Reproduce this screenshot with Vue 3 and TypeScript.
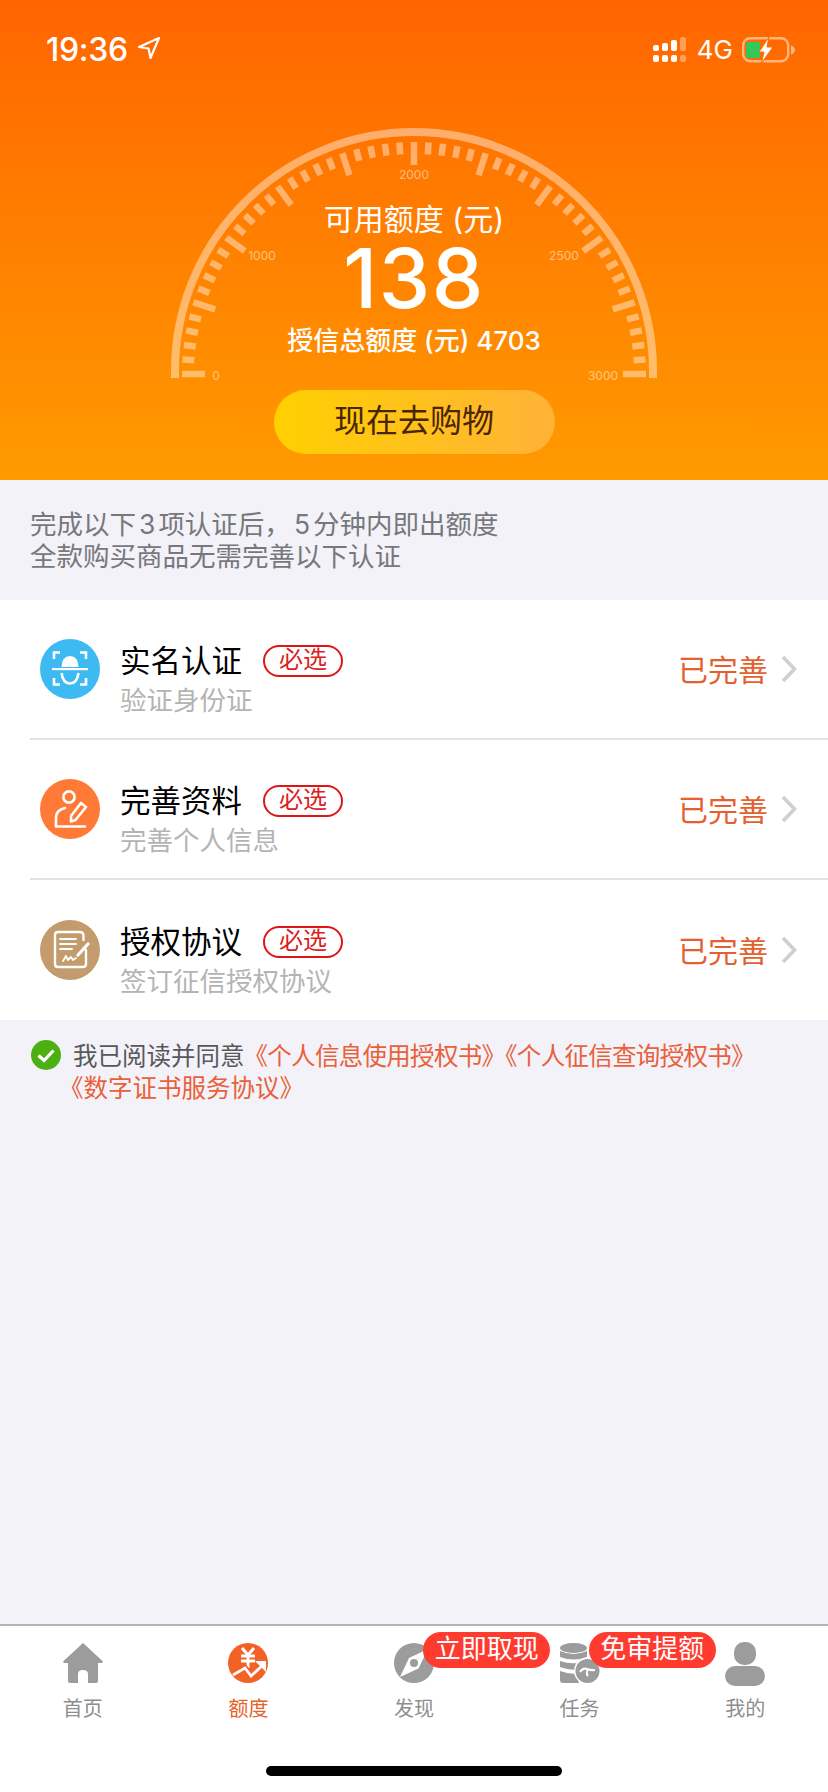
<script setup lang="ts">
// gauge ticks run over a half circle, 50 steps, a long one every 5
const cx = 250
const cy = 254

const ticks = Array.from({ length: 51 }, (_, i) => {
  const major = i % 5 === 0
  const a = (Math.PI * i) / 50
  const outer = 232
  const inner = major ? outer - 23 : outer - 12
  return {
    x1: cx - Math.cos(a) * outer,
    y1: cy - Math.sin(a) * outer,
    x2: cx - Math.cos(a) * inner,
    y2: cy - Math.sin(a) * inner,
  }
})

const scale = [
  { label: '0', x: 52, y: 260 },
  { label: '1000', x: 98, y: 140 },
  { label: '2000', x: 250, y: 59 },
  { label: '2500', x: 400, y: 140 },
  { label: '3000', x: 439, y: 260 },
]

const steps = [
  { key: 'face', title: '实名认证', sub: '验证身份证' },
  { key: 'profile', title: '完善资料', sub: '完善个人信息' },
  { key: 'sign', title: '授权协议', sub: '签订征信授权协议' },
]

const tabs = [
  { key: 'home', label: '首页' },
  { key: 'quota', label: '额度', active: true },
  { key: 'find', label: '发现', badge: '立即取现' },
  { key: 'task', label: '任务', badge: '免审提额' },
  { key: 'me', label: '我的' },
]
</script>

<template>
  <div class="page">
    <section class="hero">
      <div class="status">
        <span class="time">19:36</span>
        <svg class="loc" width="24" height="24" viewBox="0 0 24 24">
          <path d="M22 2 L2 11 L11.5 12.5 L13.5 22 Z" fill="none" stroke="#fff" stroke-width="2.2" stroke-linejoin="round" />
        </svg>
        <span class="grow"></span>
        <svg class="signal" width="34" height="28" viewBox="0 0 34 28">
          <g fill="#fff">
            <rect x="0" y="9" width="6" height="6" rx="2" />
            <rect x="9" y="7" width="6" height="8" rx="2" />
            <rect x="18" y="4" width="6" height="11" rx="2" />
            <rect x="0" y="19" width="6" height="7" rx="2" />
            <rect x="9" y="19" width="6" height="7" rx="2" />
            <rect x="18" y="19" width="6" height="7" rx="2" />
          </g>
          <g fill="#fff" opacity=".35">
            <rect x="27" y="1" width="6" height="14" rx="2" />
            <rect x="27" y="19" width="6" height="7" rx="2" />
          </g>
        </svg>
        <span class="net">4G</span>
        <svg class="battery" width="54" height="26" viewBox="0 0 54 26">
          <rect x="1.2" y="1.2" width="45" height="23" rx="7" fill="none" stroke="#fff" stroke-opacity=".5" stroke-width="2.4" />
          <path d="M4 7 Q4 5 6 5 H18 V21 H6 Q4 21 4 19 Z" fill="#34c759" />
          <path d="M27 0 L17 15 H22 L19.5 26 L31 10 H25 Z" fill="#fff" stroke="#ff6a00" stroke-width="1" />
          <path d="M49 8.5 Q53 10 53 13 Q53 16 49 17.5 Z" fill="#fff" fill-opacity=".5" />
        </svg>
      </div>

      <div class="gauge">
        <svg width="500" height="270" viewBox="0 0 500 270">
          <path
            d="M11 258 V251 A239 239 0 0 1 489 251 V258"
            fill="none"
            stroke="#fff"
            stroke-opacity=".42"
            stroke-width="8"
          />
          <line
            v-for="(t, i) in ticks"
            :key="i"
            :x1="t.x1"
            :y1="t.y1"
            :x2="t.x2"
            :y2="t.y2"
            stroke="#fff"
            stroke-opacity=".42"
            stroke-width="6.5"
          />
          <text v-for="s in scale" :key="s.label" class="scale" :x="s.x" :y="s.y" text-anchor="middle">{{ s.label }}</text>
        </svg>
        <div class="readout">
          <div class="readout-label">可用额度 (元)</div>
          <div class="readout-num">138</div>
          <div class="readout-total">授信总额度 (元) 4703</div>
        </div>
      </div>

      <div class="cta">现在去购物</div>
    </section>

    <section class="notice">
      <div>完成以下<span class="num">3</span>项认证后，<span class="num">5</span>分钟内即出额度</div>
      <div>全款购买商品无需完善以下认证</div>
    </section>

    <section class="list">
      <div v-for="step in steps" :key="step.key" class="row">
        <svg v-if="step.key === 'face'" class="row-icon" width="60" height="60" viewBox="0 0 60 60">
          <circle cx="30" cy="30" r="30" fill="#3dbaf2" />
          <path
            d="M14 20 V13.5 H20 M40 13.5 H46 V20 M14 39 V45.5 H20 M40 45.5 H46 V39"
            fill="none"
            stroke="#fff"
            stroke-width="2.6"
          />
          <path d="M21.5 28 Q22 17 30 17 Q38 17 38.5 28 Z" fill="#fff" />
          <rect x="12" y="29" width="36" height="2.2" fill="#fff" />
          <path d="M21.5 34 Q23 44.5 30 44.5 Q37 44.5 38.5 34" fill="none" stroke="#fff" stroke-width="2.6" />
        </svg>
        <svg v-else-if="step.key === 'profile'" class="row-icon" width="60" height="60" viewBox="0 0 60 60">
          <circle cx="30" cy="30" r="30" fill="#ff7a36" />
          <g fill="none" stroke="#fff" stroke-width="2.6" stroke-linejoin="round" stroke-linecap="round">
            <circle cx="29" cy="18" r="5.6" />
            <path d="M25 29 Q16 31 16 39 V47.5 H45" />
            <path d="M41 24 L46 28 L35.5 41 L31 42.5 L31 37 Z" />
          </g>
        </svg>
        <svg v-else class="row-icon" width="60" height="60" viewBox="0 0 60 60">
          <circle cx="30" cy="30" r="30" fill="#c49b6c" />
          <g fill="none" stroke="#fff" stroke-width="2.4" stroke-linecap="round" stroke-linejoin="round">
            <path d="M46 30 V44 Q46 47 43 47 H18 Q15 47 15 44 V15 Q15 12 18 12 H40 Q43 12 43.5 15 V20" />
            <path d="M20 19 H36 M20 24 H36 M20 29 H32" stroke-width="1.8" />
            <path d="M23 41 L26 36 L28 40 L31 37 L33 40 L36 38" stroke-width="1.8" />
            <path d="M48 24 L38 35" stroke-width="3.2" />
          </g>
        </svg>
        <div class="row-body">
          <div class="row-title">
            <span>{{ step.title }}</span>
            <span class="must">必选</span>
          </div>
          <div class="row-sub">{{ step.sub }}</div>
        </div>
        <span class="row-state">已完善</span>
        <svg class="chevron" width="16" height="28" viewBox="0 0 16 28">
          <path d="M2 2 L13.5 14 L2 26" fill="none" stroke="#cfcfcf" stroke-width="3.6" />
        </svg>
      </div>
    </section>

    <section class="agree">
      <svg class="agree-check" width="30" height="30" viewBox="0 0 30 30">
        <circle cx="15" cy="15" r="15" fill="#4cb012" />
        <path d="M7.5 15.5 L13 20.5 L22.5 10.5" fill="none" stroke="#fff" stroke-width="3.2" />
      </svg>
      <div class="agree-text">
        <div>我已阅读并同意<span class="link tight">《个人信息使用授权书》《个人征信查询授权书》</span></div>
        <div class="link second">《数字证书服务协议》</div>
      </div>
    </section>

    <div class="grow"></div>

    <nav class="tabbar">
      <div v-for="tab in tabs" :key="tab.key" class="tab" :class="{ active: tab.active }">
        <svg v-if="tab.key === 'home'" width="40" height="40" viewBox="0 0 40 40">
          <path
            d="M20 0 L39.5 18 Q40.5 20 38 20 H35 V38 Q35 40 33 40 H25 V31 Q25 27 20 27 Q15 27 15 31 V40 H7 Q5 40 5 38 V20 H2 Q-.5 20 .5 18 Z"
            fill="#9c9c9c"
          />
        </svg>
        <svg v-else-if="tab.key === 'quota'" width="40" height="40" viewBox="0 0 40 40">
          <circle cx="20" cy="20" r="20" fill="#f26125" />
          <path d="M14 5 L20 12 L26 5 M13 13 H27 M13 18 H27 M20 12 V25" fill="none" stroke="#fff" stroke-width="3" />
          <path d="M5 32 L17 25 L23 33 L36 21" fill="none" stroke="#f26125" stroke-width="6" />
          <path d="M5 32 L17 25 L23 33 L35 22" fill="none" stroke="#fff" stroke-width="2.8" />
          <path d="M27 18 H38 V29 Z" fill="#fff" />
        </svg>
        <svg v-else-if="tab.key === 'find'" width="40" height="40" viewBox="0 0 40 40">
          <circle cx="20" cy="20" r="20" fill="#9c9c9c" />
          <path d="M34 6 L24.5 25.5 L6 34 L15 15 Z" fill="#fff" />
          <circle cx="20" cy="20" r="4" fill="#9c9c9c" />
        </svg>
        <svg v-else-if="tab.key === 'task'" width="40" height="40" viewBox="0 0 40 40">
          <g fill="#9c9c9c">
            <ellipse cx="13.5" cy="5" rx="13.5" ry="5" />
            <path d="M0 8 Q13.5 14 27 8 V14 Q13.5 19 0 14 Z" />
            <path d="M0 18 Q8 21 18 20 L16 27 Q8 27 0 24 Z" />
            <path d="M0 28 Q8 31 16 31 L19 40 H3 Q0 40 0 37 Z" />
          </g>
          <circle cx="27.5" cy="28" r="13.5" fill="#fff" />
          <circle cx="27.5" cy="28" r="12" fill="#9c9c9c" />
          <path d="M20 29 Q23 24.5 27 26 T35 27 M27.5 27 Q26 31 28 33" fill="none" stroke="#fff" stroke-width="2" />
        </svg>
        <svg v-else class="me-icon" width="40" height="44" viewBox="0 0 40 44">
          <rect x="9" y="0" width="22" height="23" rx="10" fill="#9c9c9c" />
          <rect x="0" y="24" width="40" height="20" rx="10" fill="#9c9c9c" />
        </svg>
        <span class="tab-label">{{ tab.label }}</span>
        <span v-if="tab.badge" class="tab-badge">{{ tab.badge }}</span>
      </div>
      <div class="home-bar"></div>
    </nav>
  </div>
</template>

<style scoped>
.page {
  width: 828px;
  height: 1792px;
  display: flex;
  flex-direction: column;
  background: #f2f2f8;
  font-family: Inter, "Noto Sans CJK SC", sans-serif;
  overflow: hidden;
}

.grow {
  flex: 1;
}

.hero {
  height: 480px;
  box-sizing: border-box;
  background: linear-gradient(180deg, #ff6500 0%, #ff9a00 100%);
  display: flex;
  flex-direction: column;
  align-items: center;
  color: #fff;
}

.status {
  width: 100%;
  height: 120px;
  box-sizing: border-box;
  padding: 33px 32px 0 46px;
  display: flex;
  align-items: flex-start;
}

.time {
  font-size: 32px;
  line-height: 34px;
  font-weight: 500;
  letter-spacing: -0.3px;
}

.loc {
  margin: 3px 0 0 9px;
}

.signal {
  margin-top: 3px;
}

.net {
  margin: 0 9px 0 10px;
  font-size: 26px;
  line-height: 34px;
}

.battery {
  margin-top: 4px;
}

.gauge {
  position: relative;
  width: 500px;
  height: 270px;
}

.gauge svg {
  display: block;
}

.scale {
  font-size: 12px;
  fill: #fff;
  fill-opacity: 0.5;
}

.readout {
  position: absolute;
  top: 79px;
  left: 0;
  right: 0;
  display: flex;
  flex-direction: column;
  align-items: center;
}

.readout-label {
  font-size: 30px;
  line-height: 40px;
}

.readout-num {
  margin-top: 3px;
  font-size: 82px;
  line-height: 74px;
  font-weight: 500;
  letter-spacing: 1.5px;
}

.readout-total {
  margin-top: 7px;
  font-size: 26px;
  line-height: 36px;
  font-weight: 500;
}

.cta {
  width: 281px;
  height: 64px;
  border-radius: 32px;
  background: linear-gradient(90deg, #ffd000 0%, #ffb238 100%);
  color: #4a2600;
  font-size: 32px;
  line-height: 62px;
  text-align: center;
}

.notice {
  height: 120px;
  box-sizing: border-box;
  padding-left: 30px;
  display: flex;
  flex-direction: column;
  justify-content: center;
  font-size: 26.5px;
  line-height: 32px;
  color: #77777c;
}

.num {
  margin: 0 3px;
}

.list {
  background: #fff;
}

.row {
  position: relative;
  height: 140px;
  box-sizing: border-box;
  margin-left: 30px;
  padding: 0 29px 0 10px;
  display: flex;
  align-items: center;
  border-bottom: 2px solid #e2e2e2;
}

.row:last-child {
  border-bottom: none;
}

.row-icon {
  flex: none;
}

.row-body {
  flex: 1;
  margin-left: 20px;
  padding-top: 22px;
}

.row-title {
  display: flex;
  align-items: center;
  font-size: 30.5px;
  line-height: 40px;
  color: #000;
}

.must {
  width: 80px;
  height: 32px;
  box-sizing: border-box;
  margin-left: 21px;
  border: 2px solid #e01515;
  border-radius: 16px;
  color: #dc2020;
  font-size: 24px;
  line-height: 26px;
  text-align: center;
}

.row-sub {
  margin-top: -1px;
  font-size: 26.5px;
  line-height: 40px;
  color: #b4b4b4;
}

.row-state {
  margin-top: -2px;
  font-size: 30px;
  color: #e4602f;
}

.chevron {
  margin-left: 13px;
  margin-right: 2px;
}

.agree {
  padding: 19px 0 0 31px;
  display: flex;
  align-items: flex-start;
}

.agree-check {
  flex: none;
  margin-top: 1px;
}

.agree-text {
  margin-left: 12px;
  padding-top: 1px;
  font-size: 24.5px;
  line-height: 32px;
  color: #58585c;
  white-space: nowrap;
}

.link {
  color: #e9603a;
}

.tight {
  margin-left: -1px;
  letter-spacing: -0.7px;
}

.second {
  margin-left: -14px;
}

.tabbar {
  position: relative;
  height: 168px;
  box-sizing: border-box;
  border-top: 2px solid #b6b6ba;
  background: #fff;
  display: flex;
}

.tab {
  position: relative;
  flex: 1;
  height: 96px;
  padding-top: 17px;
  display: flex;
  flex-direction: column;
  align-items: center;
}

.me-icon {
  margin-bottom: -3px;
  margin-top: -1px;
}

.tab-label {
  margin-top: 12px;
  font-size: 20px;
  line-height: 28px;
  color: #8e8e8e;
}

.tab.active .tab-label {
  color: #e85f28;
}

.tab-badge {
  position: absolute;
  top: 6px;
  left: 92px;
  width: 127px;
  height: 36px;
  border-radius: 18px;
  background: #ff3b30;
  color: #fff;
  font-size: 26px;
  line-height: 33px;
  text-align: center;
  white-space: nowrap;
}

.home-bar {
  position: absolute;
  left: 266px;
  bottom: 16px;
  width: 296px;
  height: 10px;
  border-radius: 5px;
  background: #000;
}
</style>
